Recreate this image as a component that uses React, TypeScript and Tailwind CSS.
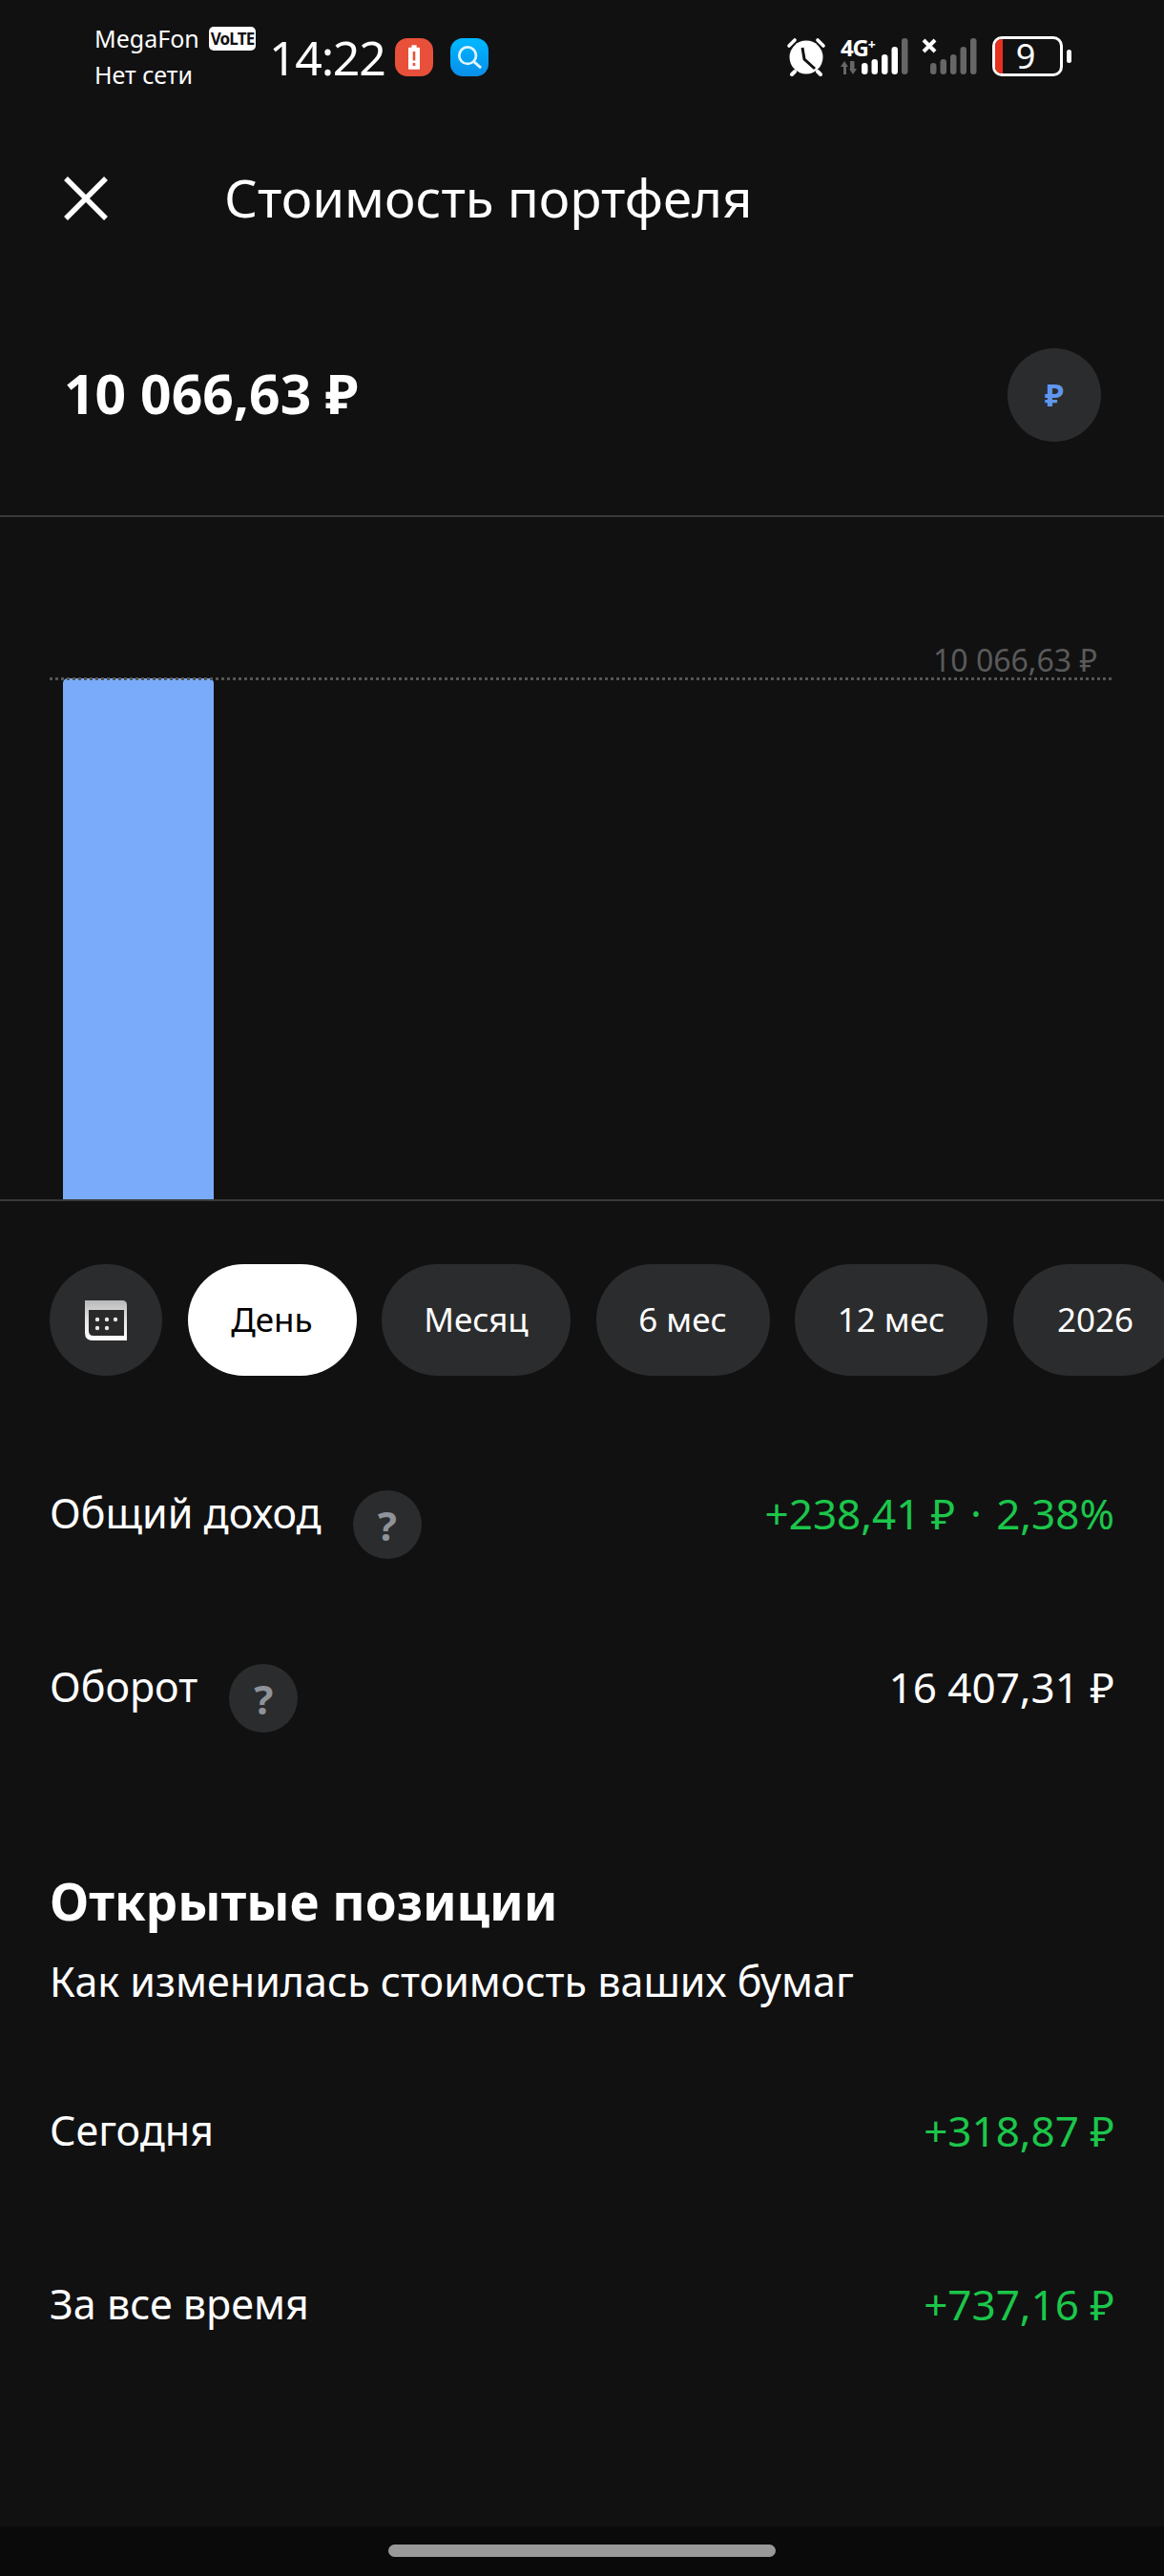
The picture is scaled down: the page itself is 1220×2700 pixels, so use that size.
import React from 'react';

const font = { fontFamily: '"Noto Sans", sans-serif' };

const periods = [
  { label: 'Месяц', width: 198 },
  { label: '6 мес', width: 182 },
  { label: '12 мес', width: 202 },
  { label: '2026', width: 173 },
];

const signalBars = [
  { x: 0, h: 12 },
  { x: 10.5, h: 16 },
  { x: 21, h: 21 },
  { x: 31.5, h: 29 },
  { x: 42, h: 38 },
];

const Signal: React.FC<{ active: number }> = ({ active }) => (
  <svg width="49" height="38" viewBox="0 0 49 38">
    {signalBars.map((b, i) => (
      <rect
        key={i}
        x={b.x}
        y={38 - b.h}
        width="6.5"
        height={b.h}
        rx="3.2"
        fill={i < active ? '#ffffff' : '#666666'}
      />
    ))}
  </svg>
);

const AlarmIcon = () => (
  <svg width="42" height="42" viewBox="0 0 42 42">
    <circle cx="21" cy="22" r="17.5" fill="#fff" />
    <path d="M3 10 L9 4 M39 10 L33 4" stroke="#fff" strokeWidth="3.6" strokeLinecap="round" />
    <path d="M9 37 L6 40 M33 37 L36 40" stroke="#fff" strokeWidth="4" strokeLinecap="round" />
    <path d="M17 12 L19 24 L30 34" stroke="#111112" strokeWidth="3" fill="none" />
  </svg>
);

const CalendarIcon = () => (
  <svg width="44" height="42" viewBox="0 0 44 42">
    <defs>
      <linearGradient id="cal" x1="0" y1="0" x2="0" y2="1">
        <stop offset="0" stopColor="#b9b9b9" />
        <stop offset="0.5" stopColor="#e6e6e6" />
        <stop offset="1" stopColor="#ffffff" />
      </linearGradient>
    </defs>
    <path d="M0 0 H39 Q44 0 44 5 V42 H8 Q0 42 0 34 Z" fill="url(#cal)" />
    <path d="M4 10 H41 V37 H9 Q4 37 4 32 Z" fill="#2a2a2a" />
    <circle cx="13" cy="20" r="2.2" fill="#e8e8e8" />
    <circle cx="23" cy="20" r="2.2" fill="#e8e8e8" />
    <circle cx="32" cy="20" r="2.2" fill="#e8e8e8" />
    <circle cx="13" cy="29" r="2.2" fill="#e8e8e8" />
    <circle cx="23" cy="29" r="2.2" fill="#e8e8e8" />
  </svg>
);

const Hint = () => (
  <div className="flex h-[72px] w-[72px] shrink-0 items-center justify-center rounded-full bg-[#2b2c2d] text-[42px] font-bold text-[#8f939a]">
    ?
  </div>
);

const StatusBar = () => (
  <div className="flex h-[120px] items-start pl-[99px] pt-[21px] text-white">
    <div className="w-[183px] text-[25px] leading-[38px]">
      <div className="flex items-center gap-[10px]">
        <span>MegaFon</span>
        <span className="rounded-[5px] bg-white px-[2px] text-[17px] font-bold leading-[25px] tracking-tighter text-[#111112]">VoLTE</span>
      </div>
      <div>Нет сети</div>
    </div>
    <div className="mt-[10px] w-[132px] text-[50px] leading-[58px] tracking-tight">14:22</div>
    <div className="mt-[19px] flex gap-[18px]">
      <div className="flex h-[40px] w-[40px] items-center justify-center rounded-[13px] bg-[#e8503a]">
        <svg width="12" height="26" viewBox="0 0 14 30">
          <path d="M4 0 H10 V3 H13 Q14 3 14 4 V29 Q14 30 13 30 H1 Q0 30 0 29 V4 Q0 3 1 3 H4 Z" fill="#fff" />
          <rect x="5.5" y="8" width="3" height="11" fill="#e8503a" />
          <rect x="5.5" y="22" width="3" height="3.5" fill="#e8503a" />
        </svg>
      </div>
      <div className="flex h-[40px] w-[40px] items-center justify-center rounded-[13px] bg-gradient-to-b from-[#00b8ff] to-[#0a8eea]">
        <svg width="26" height="26" viewBox="0 0 28 28" fill="none" stroke="#dff5ff" strokeWidth="3">
          <circle cx="12" cy="12" r="9.5" />
          <path d="M19 19 L27 26" />
        </svg>
      </div>
    </div>
    <div className="ml-auto mr-[97px] mt-[17px] flex items-center">
      <AlarmIcon />
      <div className="relative ml-[15px] h-[42px] w-[71px]">
        <span className="absolute left-0 top-0 text-[24px] font-bold leading-[24px] tracking-tighter">4G<sup className="text-[14px]">+</sup></span>
        <svg className="absolute bottom-[2px] left-0" width="17" height="14" viewBox="0 0 17 14" fill="#666666">
          <path d="M4 0 L8 6 H6 V14 H3 V6 H0 Z" />
          <path d="M13 14 L17 8 H14.5 V0 H10 V8 H9 Z" />
        </svg>
        <div className="absolute bottom-[2px] right-0 flex">
          <Signal active={4} />
        </div>
      </div>
      <div className="relative ml-[14px] h-[42px] w-[58px]">
        <svg className="absolute left-0 top-[2px]" width="16" height="16" viewBox="0 0 16 16">
          <path d="M2 2 L14 14 M14 2 L2 14" stroke="#fff" strokeWidth="4" />
        </svg>
        <div className="absolute bottom-[2px] right-0 flex">
          <Signal active={0} />
        </div>
      </div>
      <div className="relative ml-[16px] flex h-[42px] w-[74px] items-center justify-center rounded-[10px] border-[3px] border-white text-[36px] leading-[36px]">
        <div className="absolute bottom-0 left-0 top-0 w-[8px] rounded-l-[7px] bg-[#e8301f]" />
        <span className="ml-[-4px]">9</span>
      </div>
      <div className="ml-[4px] h-[14px] w-[5px] rounded-full bg-white" />
    </div>
  </div>
);

const Row: React.FC<{ label: string; value: React.ReactNode; green?: boolean; hint?: boolean }> = ({ label, value, green, hint }) => (
  <div className="flex items-start justify-between">
    <div className="flex items-start gap-[33px]">
      <span className="text-[43px] leading-[48px] text-white">{label}</span>
      {hint && <Hint />}
    </div>
    <span className={`text-[44px] leading-[48px] ${green ? 'text-[#1cc64a]' : 'text-white'}`}>{value}</span>
  </div>
);

export default function App() {
  return (
    <div className="flex h-[2700px] w-[1220px] flex-col overflow-hidden bg-[#111112]" style={font}>
      <StatusBar />

      <div className="flex h-[176px] items-center pl-[67px] text-white">
        <svg width="46" height="46" viewBox="0 0 46 46" stroke="#fff" strokeWidth="5.5">
          <path d="M2 2 L44 44 M44 2 L2 44" />
        </svg>
        <h1 className="ml-[122px] text-[54.6px] font-normal">Стоимость портфеля</h1>
      </div>

      <div className="flex h-[246px] items-start justify-between border-b-2 border-[#3a3a3b] pl-[67px] pr-[66px] pt-[69px]">
        <div className="mt-[11px] text-[57px] font-bold leading-[72px] text-white">10 066,63 ₽</div>
        <div className="flex h-[98px] w-[98px] items-center justify-center rounded-full bg-[#2b2c2d] text-[33px] font-bold text-[#5f97ee]">₽</div>
      </div>

      <div className="relative flex h-[717px] flex-col justify-end border-b-2 border-[#3a3a3b]">
        <span className="absolute right-[70px] top-[130px] text-[32px] leading-[40px] text-[#5a5a5a]">10 066,63 ₽</span>
        <div className="absolute left-[52px] right-[55px] top-[168px] border-t-[3px] border-dotted border-[#555555]" />
        <div className="ml-[66px] h-[546px] w-[158px] rounded-t-[5px] bg-[#7aabfa]" />
      </div>

      <div className="mt-[66px] flex h-[117px] gap-[26.5px] overflow-hidden pl-[52px]">
        <div className="flex w-[118px] shrink-0 items-center justify-center rounded-full bg-[#2b2c2d]">
          <CalendarIcon />
        </div>
        <div className="flex w-[177px] shrink-0 items-center justify-center rounded-full bg-white text-[35px] text-black">День</div>
        {periods.map((p) => (
          <div
            key={p.label}
            className="flex shrink-0 items-center justify-center rounded-full bg-[#2b2c2d] text-[35px] text-white"
            style={{ width: p.width }}
          >
            {p.label}
          </div>
        ))}
      </div>

      <div className="mt-[120px] flex flex-col gap-[110px] px-[52px]">
        <Row
          label="Общий доход"
          value={
            <>
              +238,41 ₽<span className="mx-[4px]"> · </span>2,38%
            </>
          }
          green
          hint
        />
        <Row label="Оборот" value="16 407,31 ₽" hint />
      </div>

      <div className="mt-[142px] px-[52px]">
        <h2 className="text-[53px] font-bold leading-[70px] text-white">Открытые позиции</h2>
        <p className="mt-[21px] text-[43px] leading-[56px] text-white">Как изменилась стоимость ваших бумаг</p>
      </div>

      <div className="mt-[104px] flex flex-col gap-[134px] px-[52px]">
        <Row label="Сегодня" value="+318,87 ₽" green />
        <Row label="За все время" value="+737,16 ₽" green />
      </div>

      <div className="mt-auto flex h-[52px] items-start justify-center bg-[#0a0a0a] pt-[19px]">
        <div className="h-[13px] w-[406px] rounded-full bg-[#999999]" />
      </div>
    </div>
  );
}
